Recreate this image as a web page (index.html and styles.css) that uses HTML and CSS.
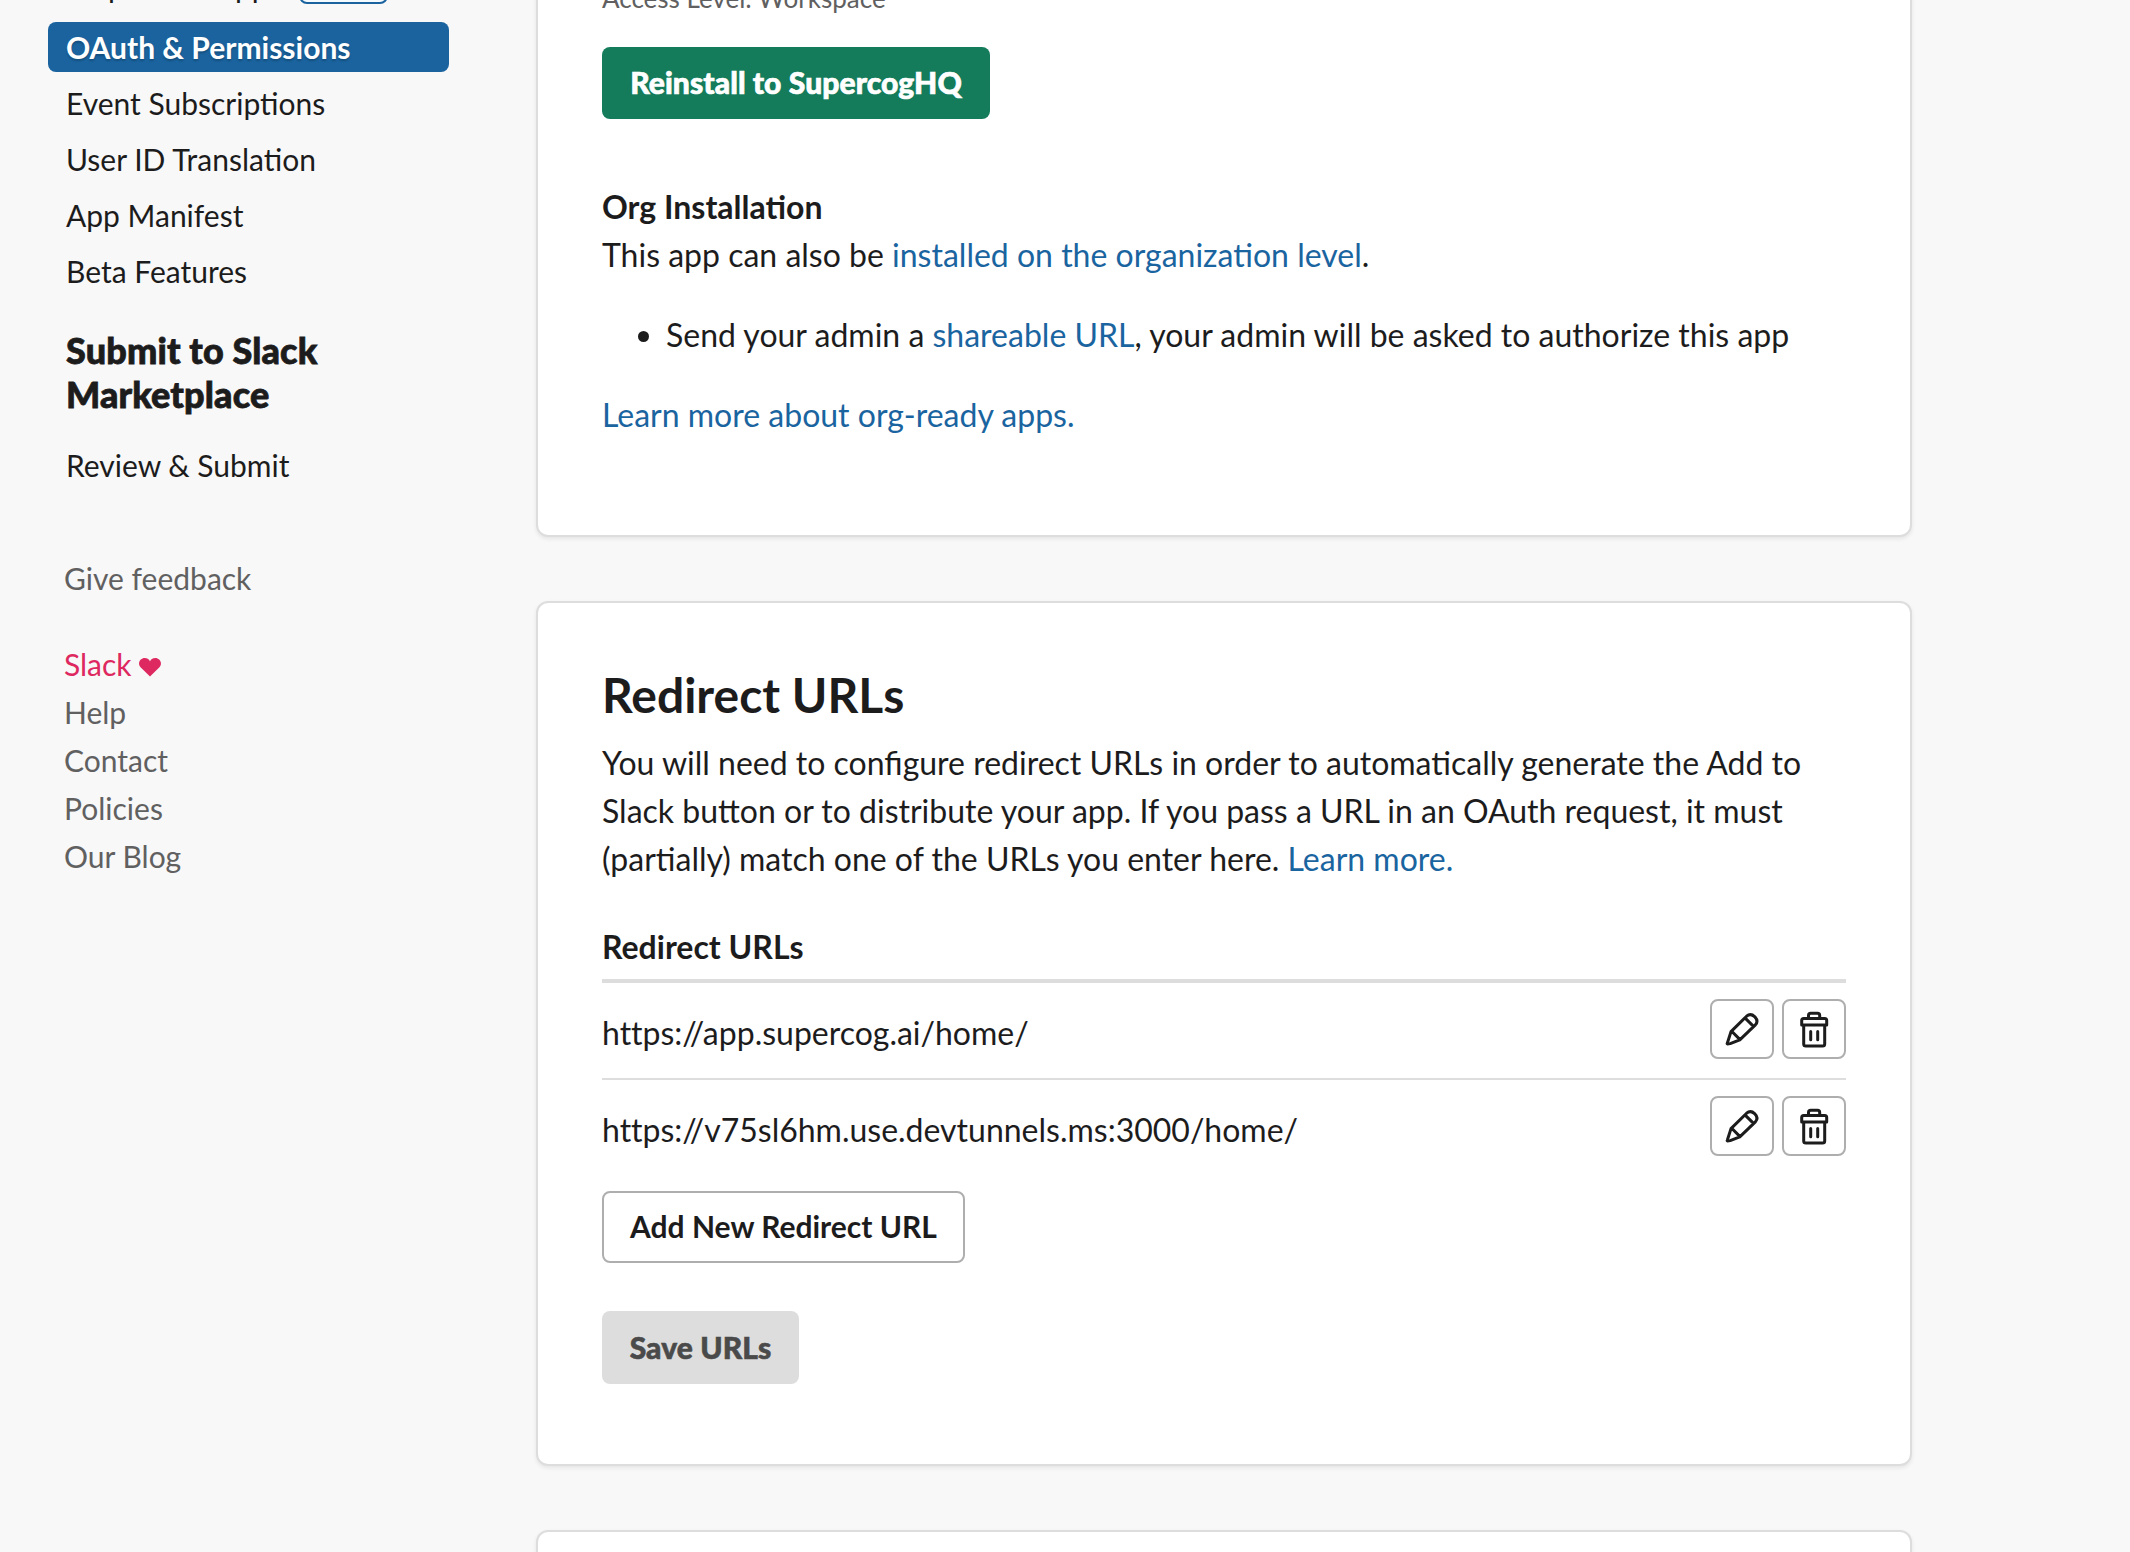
FILE: index.html
```html
<!DOCTYPE html>
<html lang="en">
<head>
<meta charset="utf-8">
<title>OAuth &amp; Permissions</title>
<link rel="stylesheet" href="styles.css">
</head>
<body>
<svg class="sprite" aria-hidden="true">
  <symbol id="pencil" viewBox="0 0 60 56">
    <path d="M15.3 42.3 L19 30.6 L34.6 15.2 Q38.6 11.8 42.6 15.6 Q46.9 19.8 43.4 23.9 L27.8 38.9 L18.2 42.6 Q14.4 43.4 15.3 42.3 Z M20.2 30.8 L28 38.6 M33.7 17.6 L41.5 25.4"/>
  </symbol>
  <symbol id="trash" viewBox="0.6 0 60 56">
    <path d="M18.3 24.1 V19.5 Q18.3 17.5 20.3 17.5 H41.3 Q43.3 17.5 43.3 19.5 V24.1 Z M25.1 17 V14.5 Q25.1 12.3 27.3 12.3 H34.1 Q36.3 12.3 36.3 14.5 V17 M20.3 24.5 V43 Q20.3 45.1 22.4 45.1 H39.2 Q41.3 45.1 41.3 43 V24.5 M27.3 30.5 V38.8 M34.3 30.5 V38.8"/>
  </symbol>
</svg>
<div class="page">
  <aside class="sidebar">
    <nav class="nav">
      <a class="nav-item nav-item--tagged">Steps from Apps <span class="tag">Legacy</span></a>
      <a class="nav-item nav-item--active">OAuth &amp; Permissions</a>
      <a class="nav-item">Event Subscriptions</a>
      <a class="nav-item">User ID Translation</a>
      <a class="nav-item">App Manifest</a>
      <a class="nav-item">Beta Features</a>
    </nav>
    <h3 class="nav-heading">Submit to Slack<br>Marketplace</h3>
    <nav class="nav"><a class="nav-item">Review &amp; Submit</a></nav>
    <div class="links">
      <a class="feedback">Give feedback</a>
      <a class="love">Slack <svg class="heart" viewBox="0 0 22 19"><path d="M11 18.6 L1.8 9.6 C-2.5 4.5 2 0 5.5 0 C8.5 0 10.3 1.5 11 3.4 C11.7 1.5 13.5 0 16.5 0 C20 0 24.5 4.5 20.2 9.6 Z"/></svg></a>
      <a>Help</a>
      <a>Contact</a>
      <a>Policies</a>
      <a>Our Blog</a>
    </div>
  </aside>
  <main class="main">
    <section class="card card--install">
      <p class="meta">Access Level: Workspace</p>
      <button class="btn btn--primary">Reinstall to SupercogHQ</button>
      <h4 class="label org-title">Org Installation</h4>
      <p>This app can also be <a>installed on the organization level</a>.</p>
      <ul class="steps"><li>Send your admin a <a>shareable URL</a>, your admin will be asked to authorize this app</li></ul>
      <p><a>Learn more about org-ready apps.</a></p>
    </section>
    <section class="card card--urls">
      <h2 class="title">Redirect URLs</h2>
      <p>You will need to configure redirect URLs in order to automatically generate the Add to<br>Slack button or to distribute your app. If you pass a URL in an OAuth request, it must<br>(partially) match one of the URLs you enter here. <a>Learn more.</a></p>
      <h4 class="label table-head">Redirect URLs</h4>
      <div class="row">
        <span class="url">https://app.supercog.ai/home/</span>
        <button class="icon-btn" aria-label="Edit"><svg><use href="#pencil"/></svg></button>
        <button class="icon-btn" aria-label="Delete"><svg><use href="#trash"/></svg></button>
      </div>
      <div class="row">
        <span class="url">https://v75sl6hm.use.devtunnels.ms:3000/home/</span>
        <button class="icon-btn" aria-label="Edit"><svg><use href="#pencil"/></svg></button>
        <button class="icon-btn" aria-label="Delete"><svg><use href="#trash"/></svg></button>
      </div>
      <button class="btn btn--outline">Add New Redirect URL</button>
      <button class="btn btn--disabled" disabled>Save URLs</button>
    </section>
    <section class="card card--next"></section>
  </main>
</div>
</body>
</html>
```
FILE: styles.css
```css
* { box-sizing: border-box; }
html, body { height: 1552px; overflow: hidden; }
body {
  margin: 0;
  background: #f8f8f8;
  color: #1d1c1d;
  font: 32px/48px Lato, Carlito, sans-serif;
}
p, h2, h3, h4, ul { margin: 0; padding: 0; }
.sprite { display: none; }
.page { display: flex; align-items: flex-start; height: 1552px; overflow: hidden; }

.sidebar { width: 536px; padding-left: 48px; font-size: 30px; }
.nav { display: flex; flex-direction: column; gap: 6px; width: 401px; }
.nav-item { height: 50px; padding-left: 18px; border-radius: 8px; line-height: 50px; white-space: nowrap; }
.nav-item--tagged { display: flex; align-items: center; margin: -42px 0 3px; height: 55px; }
.tag {
  width: 89px; height: 37px; margin-left: 17px;
  border: 2px solid #1a639e; border-radius: 8px;
  background: #f4fafd; color: #1a639e;
  font-size: 22px; font-weight: 700; line-height: 28px; text-align: center;
}
.nav-item--active { background: #1a639e; color: #fff; font-weight: 700; text-shadow: 0 2px 2px rgba(0, 0, 0, .2); }
.nav-heading {
  margin: 32px 0 24px; padding-left: 18px;
  font-size: 36px; line-height: 44px; font-weight: 900;
  letter-spacing: .14px; -webkit-text-stroke: .8px currentColor;
}
.links { display: flex; flex-direction: column; margin: 64px 0 0 16px; color: #616061; }
.feedback { margin-bottom: 38px; }
.love { color: #de2960; }
.heart { width: 22px; height: 19px; vertical-align: -1px; fill: currentColor; }

.main { width: 1376px; }
.card {
  padding: 0 64px;
  border: 2px solid #ddd;
  border-radius: 12px;
  background: #fff;
  box-shadow: 0 2px 4px rgba(0, 0, 0, .08);
}
.card a { color: #1a64a0; }
.card--install { height: 565px; margin-top: -28px; }
.meta { color: #616061; font-size: 26px; height: 73px; }
.btn {
  display: block; height: 72px; padding: 0 0 2px;
  border: 0; border-radius: 8px;
  font: 900 30px/60px Lato, Carlito, sans-serif; text-align: center; white-space: nowrap;
}
.btn--primary { width: 388px; background: #147b5b; color: #fff; letter-spacing: .1px; -webkit-text-stroke: .7px currentColor; }
.label { font-size: 32px; font-weight: 700; }
.org-title { margin-top: 64px; }
.steps { margin: 32px 0; padding-left: 64px; }

.card--urls { height: 865px; margin-top: 64px; padding-top: 58px; }
.title { height: 78px; font-size: 48px; line-height: 68px; font-weight: 700; }
.table-head { height: 60px; margin-top: 40px; border-bottom: 4px solid #ddd; }
.row { display: flex; gap: 8px; padding: 16px 0 19px; border-bottom: 2px solid #ddd; }
.row + .row { border-bottom: 0; padding-bottom: 0; }
.url { flex: 1; padding-top: 10px; white-space: nowrap; font-variant-ligatures: none; }
.icon-btn { width: 64px; height: 60px; padding: 0; border: 2px solid #aeaeae; border-radius: 8px; background: #fff; }
.icon-btn svg { display: block; width: 60px; height: 56px; fill: none; stroke: #1d1c1d; stroke-width: 3; stroke-linejoin: round; stroke-linecap: round; }
.btn--outline { width: 363px; margin-top: 35px; border: 2px solid #aeaeae; background: #fff; color: #1d1c1d; font-weight: 700; }
.btn--disabled { width: 197px; height: 73px; margin-top: 48px; background: #ddd; color: #4a4a4a; letter-spacing: .1px; -webkit-text-stroke: .6px currentColor; }
.card--next { height: 100px; margin-top: 64px; }
```
